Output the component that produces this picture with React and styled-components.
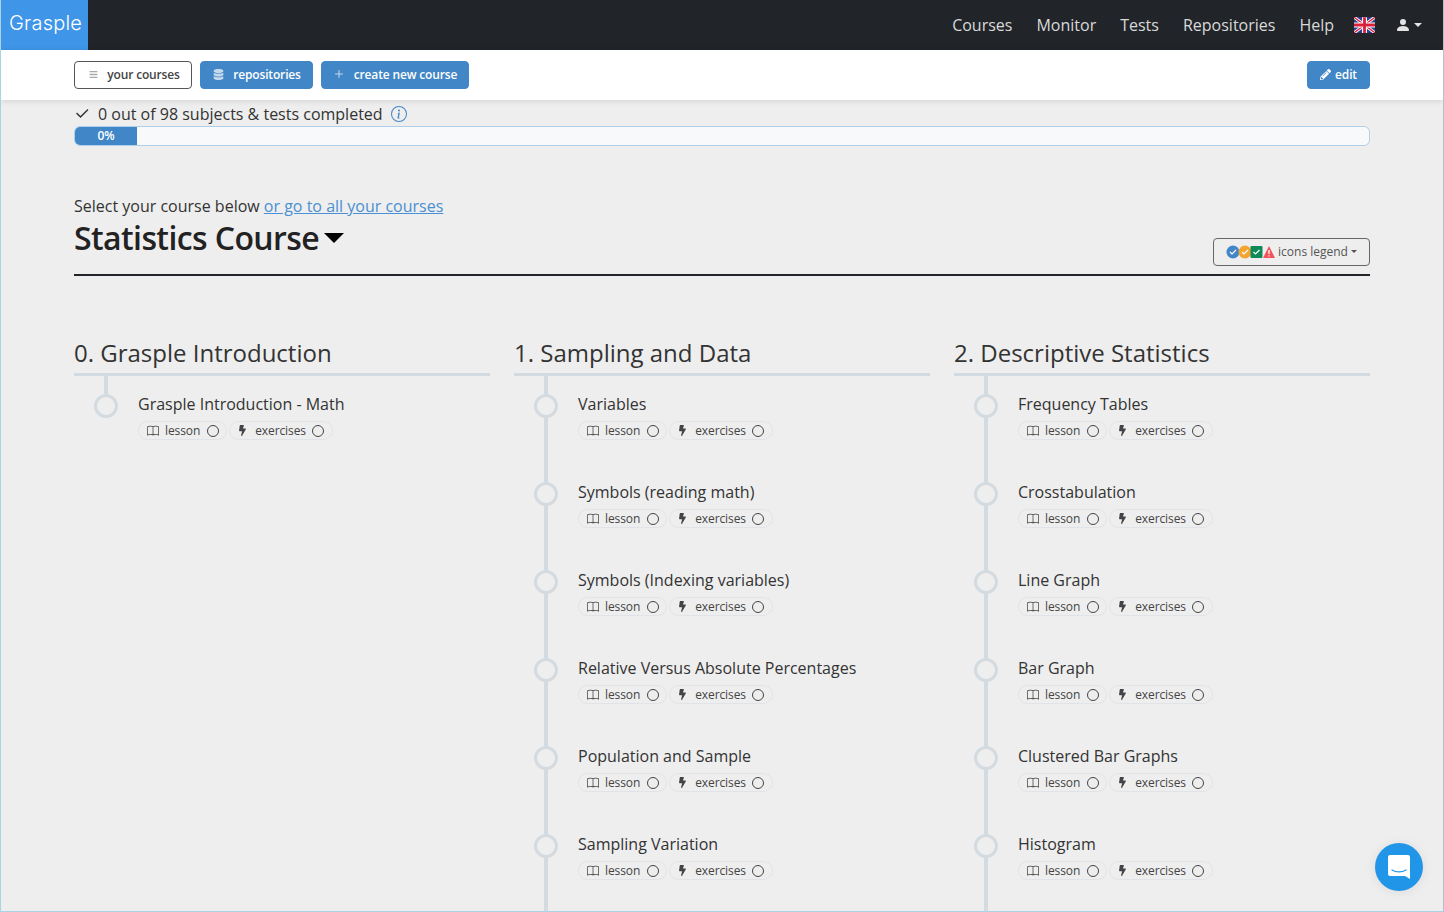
import React from 'react';
import styled, { createGlobalStyle } from 'styled-components';
import { BsBook, BsInfoCircle, BsCheck2, BsPersonFill } from 'react-icons/bs';
import { FaBolt, FaBars, FaDatabase, FaPencilAlt } from 'react-icons/fa';
import { FiPlus } from 'react-icons/fi';

const Global = createGlobalStyle`
  html, body { margin: 0; padding: 0; height: 100%; overflow: hidden; }
  body { font-family: "Open Sans", "Liberation Sans", sans-serif; background: #eee; color: #333; }
  * { box-sizing: border-box; }
`;

const Page = styled.div`
  height: 912px;
  overflow: hidden;
  border-left: 1px solid #a9d3e6;
  border-right: 1px solid #b9c0c4;
  border-bottom: 1px solid #a9d3e6;
  background: #eee;
  position: relative;
`;

const Nav = styled.nav`
  height: 50px;
  background: #212529;
  display: flex;
  align-items: stretch;
  margin-left: -1px;
  margin-right: -1px;
`;
const Brand = styled.div`
  width: 88px;
  background: #3f95e8;
  color: #fff;
  font-family: "Inter", "Lato", sans-serif;
  font-weight: 300;
  font-size: 20px;
  line-height: 47px;
  padding-left: 9px;
  letter-spacing: 0.2px;
`;
const NavLinks = styled.div`
  margin-left: auto;
  display: flex;
  align-items: center;
  gap: 24px;
  padding-right: 22px;
`;
const NavLink = styled.a`
  color: #d9d9d9;
  font-size: 16px;
  line-height: 50px;
`;
const FlagIcon = styled.svg`
  margin-left: -4px;
`;
const UserMenu = styled.div`
  display: flex;
  align-items: center;
  gap: 3px;
  color: #e4e4e4;
  margin-left: -4px;
`;
const Caret = styled.span`
  display: inline-block;
  width: 0;
  height: 0;
  border-left: ${p => p.$s}px solid transparent;
  border-right: ${p => p.$s}px solid transparent;
  border-top: ${p => p.$s}px solid ${p => p.$c};
`;

const SubBar = styled.div`
  height: 50px;
  background: #fff;
  box-shadow: 0 1px 6px rgba(0, 0, 0, 0.12);
  display: flex;
  align-items: center;
  gap: 8px;
  padding: 0 73px;
  position: relative;
`;
const Btn = styled.button`
  height: 28px;
  width: ${p => p.$w}px;
  border-radius: 4px;
  border: 1px solid ${p => (p.$outline ? '#555' : '#4186c6')};
  background: ${p => (p.$outline ? '#fff' : '#4186c6')};
  color: ${p => (p.$outline ? '#444' : '#fff')};
  font-family: inherit;
  font-size: 12px;
  font-weight: 600;
  letter-spacing: -0.15px;
  display: flex;
  align-items: center;
  justify-content: center;
  gap: ${p => p.$gap ?? 9}px;
  padding: 0 0 2px ${p => p.$pl ?? 0}px;
  margin-left: ${p => (p.$right ? 'auto' : '0')};
  svg { color: ${p => (p.$outline ? '#aaa' : p.$right ? '#fff' : '#c5d9ec')}; }
`;

const Main = styled.main`
  padding: 0 73px;
`;
const Progress = styled.div`
  height: 26px;
  display: flex;
  align-items: center;
  gap: 8px;
  font-size: 16px;
  color: #333;
  padding-top: 1px;
  svg.check { color: #222; stroke-width: 0.6px; stroke: #222; }
  svg.info { color: #4186c6; margin-left: 0; }
`;
const Bar = styled.div`
  height: 20px;
  border: 1px solid #aecfec;
  border-radius: 6px;
  background: #f8f9fa;
  overflow: hidden;
`;
const Fill = styled.div`
  height: 100%;
  background: #4186c6;
  color: #fff;
  font-size: 12px;
  font-weight: 600;
  line-height: 18px;
  text-align: center;
`;
const Select = styled.div`
  margin-top: 49px;
  font-size: 16px;
  line-height: 22px;
  color: #333;
  a { color: #4a90d2; text-decoration: underline; }
`;
const TitleRow = styled.div`
  height: 59px;
  border-bottom: 2px solid #212529;
  display: flex;
  align-items: flex-start;
  justify-content: space-between;
`;
const Title = styled.h1`
  margin: 0;
  font-size: 32px;
  font-weight: 600;
  line-height: 42px;
  letter-spacing: -0.6px;
  color: #222;
  display: flex;
  align-items: center;
  gap: 5px;
`;
const Legend = styled.button`
  margin-top: 21px;
  width: 157px;
  height: 28px;
  border: 1px solid #666;
  border-radius: 4px;
  background: transparent;
  color: #555;
  font-family: inherit;
  font-size: 12px;
  display: flex;
  align-items: center;
  justify-content: center;
  gap: 3px;
  padding: 0 0 1px;
`;

const Columns = styled.div`
  display: grid;
  grid-template-columns: repeat(3, 416px);
  gap: 24px;
  margin-top: 59px;
`;
const Heading = styled.h2`
  margin: 0;
  height: 41px;
  font-size: 24px;
  font-weight: 400;
  line-height: 36px;
  color: #333;
  border-bottom: 3px solid #d4dbe0;
`;
const Item = styled.div`
  height: 88px;
  position: relative;
  padding: 16px 0 0 64px;
  &::before {
    content: '';
    position: absolute;
    left: 30px;
    top: 0;
    width: 4px;
    height: ${p => (p.$last ? '18px' : '88px')};
    background: #d4dbe0;
  }
`;
const Tail = styled.div`
  width: 4px;
  height: 40px;
  margin-left: 30px;
  background: #d4dbe0;
`;
const Dot = styled.span`
  position: absolute;
  left: 20px;
  top: 18px;
  width: 24px;
  height: 24px;
  border-radius: 50%;
  border: 3px solid #d4dbe0;
  background: #eee;
`;
const ItemTitle = styled.div`
  font-size: 16px;
  line-height: 24px;
  color: #333;
`;
const Pills = styled.div`
  display: flex;
  gap: 2px;
  margin-top: 5px;
`;
const Pill = styled.span`
  height: 19px;
  border: 1px solid #e0e4e8;
  border-radius: 10px;
  display: inline-flex;
  align-items: center;
  font-size: 12px;
  letter-spacing: -0.1px;
  color: #444;
  padding: ${p => p.$pad};
  gap: ${p => p.$gap}px;
`;
const Ring = styled.span`
  width: 12px;
  height: 12px;
  border: 1px solid #444;
  border-radius: 50%;
  margin-left: ${p => p.$ml}px;
`;

const Chat = styled.div`
  position: absolute;
  right: 20px;
  bottom: 20px;
  width: 48px;
  height: 48px;
  border-radius: 50%;
  background: #2196e8;
  box-shadow: 0 1px 12px rgba(0, 0, 0, 0.08);
  display: flex;
  align-items: center;
  justify-content: center;
`;

const Flag = () => (
  <FlagIcon width="21" height="16" viewBox="0 0 60 45">
    <rect width="60" height="45" fill="#2a3f8f" />
    <path d="M0 0L60 45M60 0L0 45" stroke="#fff" strokeWidth="9" />
    <path d="M0 0L60 45M60 0L0 45" stroke="#d8203a" strokeWidth="3.5" />
    <path d="M30 0V45M0 22.5H60" stroke="#fff" strokeWidth="14" />
    <path d="M30 0V45M0 22.5H60" stroke="#d8203a" strokeWidth="8" />
  </FlagIcon>
);

const LegendSvg = () => (
  <svg width="49" height="14" viewBox="0 0 49 14">
    <circle cx="7" cy="7" r="6.5" fill="#4186c6" />
    <path d="M4 7l2 2 4-4" stroke="#fff" strokeWidth="1.2" fill="none" />
    <circle cx="19" cy="7" r="6.5" fill="#f4a430" />
    <path d="M16 7l2 2 4-4" stroke="#fff" strokeWidth="1.2" fill="none" />
    <rect x="24.5" y="1" width="12" height="12" rx="1" fill="#0d8a57" />
    <path d="M27.5 7l2 2 4-4" stroke="#fff" strokeWidth="1.2" fill="none" />
    <path d="M43 1l6 12H37z" fill="#f4525a" />
    <path d="M43 5v4M43 10.2v1.4" stroke="#fff" strokeWidth="1.3" />
  </svg>
);

const columns = [
  { title: '0. Grasple Introduction', items: ['Grasple Introduction - Math'], last: true },
  {
    title: '1. Sampling and Data',
    items: ['Variables', 'Symbols (reading math)', 'Symbols (Indexing variables)', 'Relative Versus Absolute Percentages', 'Population and Sample', 'Sampling Variation'],
  },
  {
    title: '2. Descriptive Statistics',
    items: ['Frequency Tables', 'Crosstabulation', 'Line Graph', 'Bar Graph', 'Clustered Bar Graphs', 'Histogram'],
  },
];

export default function App() {
  return (
    <Page>
      <Global />
      <Nav>
        <Brand>Grasple</Brand>
        <NavLinks>
          {['Courses', 'Monitor', 'Tests', 'Repositories', 'Help'].map(l => <NavLink key={l}>{l}</NavLink>)}
          <Flag />
          <UserMenu>
            <BsPersonFill size={16} />
            <Caret $s={4} $c="#e4e4e4" />
          </UserMenu>
        </NavLinks>
      </Nav>
      <SubBar>
        <Btn $outline $w={118} $pl={3}><FaBars size={9} />your courses</Btn>
        <Btn $w={113} $pl={1}><FaDatabase size={11} />repositories</Btn>
        <Btn $w={148}><FiPlus size={12} />create new course</Btn>
        <Btn $right $w={63} $gap={4}><FaPencilAlt size={11} />edit</Btn>
      </SubBar>
      <Main>
        <Progress>
          <BsCheck2 className="check" size={16} />
          <span>0 out of 98 subjects &amp; tests completed</span>
          <BsInfoCircle className="info" size={16} />
        </Progress>
        <Bar><Fill style={{ width: 62 }}>0%</Fill></Bar>
        <Select>Select your course below <a>or go to all your courses</a></Select>
        <TitleRow>
          <Title>Statistics Course<Caret $s={10} $c="#000" /></Title>
          <Legend><LegendSvg />icons legend <Caret $s={3} $c="#555" /></Legend>
        </TitleRow>
        <Columns>
          {columns.map(c => (
            <section key={c.title}>
              <Heading>{c.title}</Heading>
              {c.items.map(t => (
                <Item key={t} $last={c.last}>
                  <Dot />
                  <ItemTitle>{t}</ItemTitle>
                  <Pills>
                    <Pill $pad="0 7px 0 8px" $gap={6}><BsBook size={12} />lesson<Ring $ml={1} /></Pill>
                    <Pill $pad="0 8px 0 7px" $gap={7}><FaBolt size={11} />exercises<Ring $ml={-1} /></Pill>
                  </Pills>
                </Item>
              ))}
              {!c.last && <Tail />}
            </section>
          ))}
        </Columns>
      </Main>
      <Chat>
        <svg width="22" height="24" viewBox="0 0 22 24">
          <path d="M2 0h18a2 2 0 0 1 2 2v22l-5-3H2a2 2 0 0 1-2-2V2a2 2 0 0 1 2-2z" fill="#fff" />
          <path d="M4 15c4 2.600 10 2.600 14 0" stroke="#2196e8" strokeWidth="1.300" fill="none" strokeLinecap="round" />
        </svg>
      </Chat>
    </Page>
  );
}
